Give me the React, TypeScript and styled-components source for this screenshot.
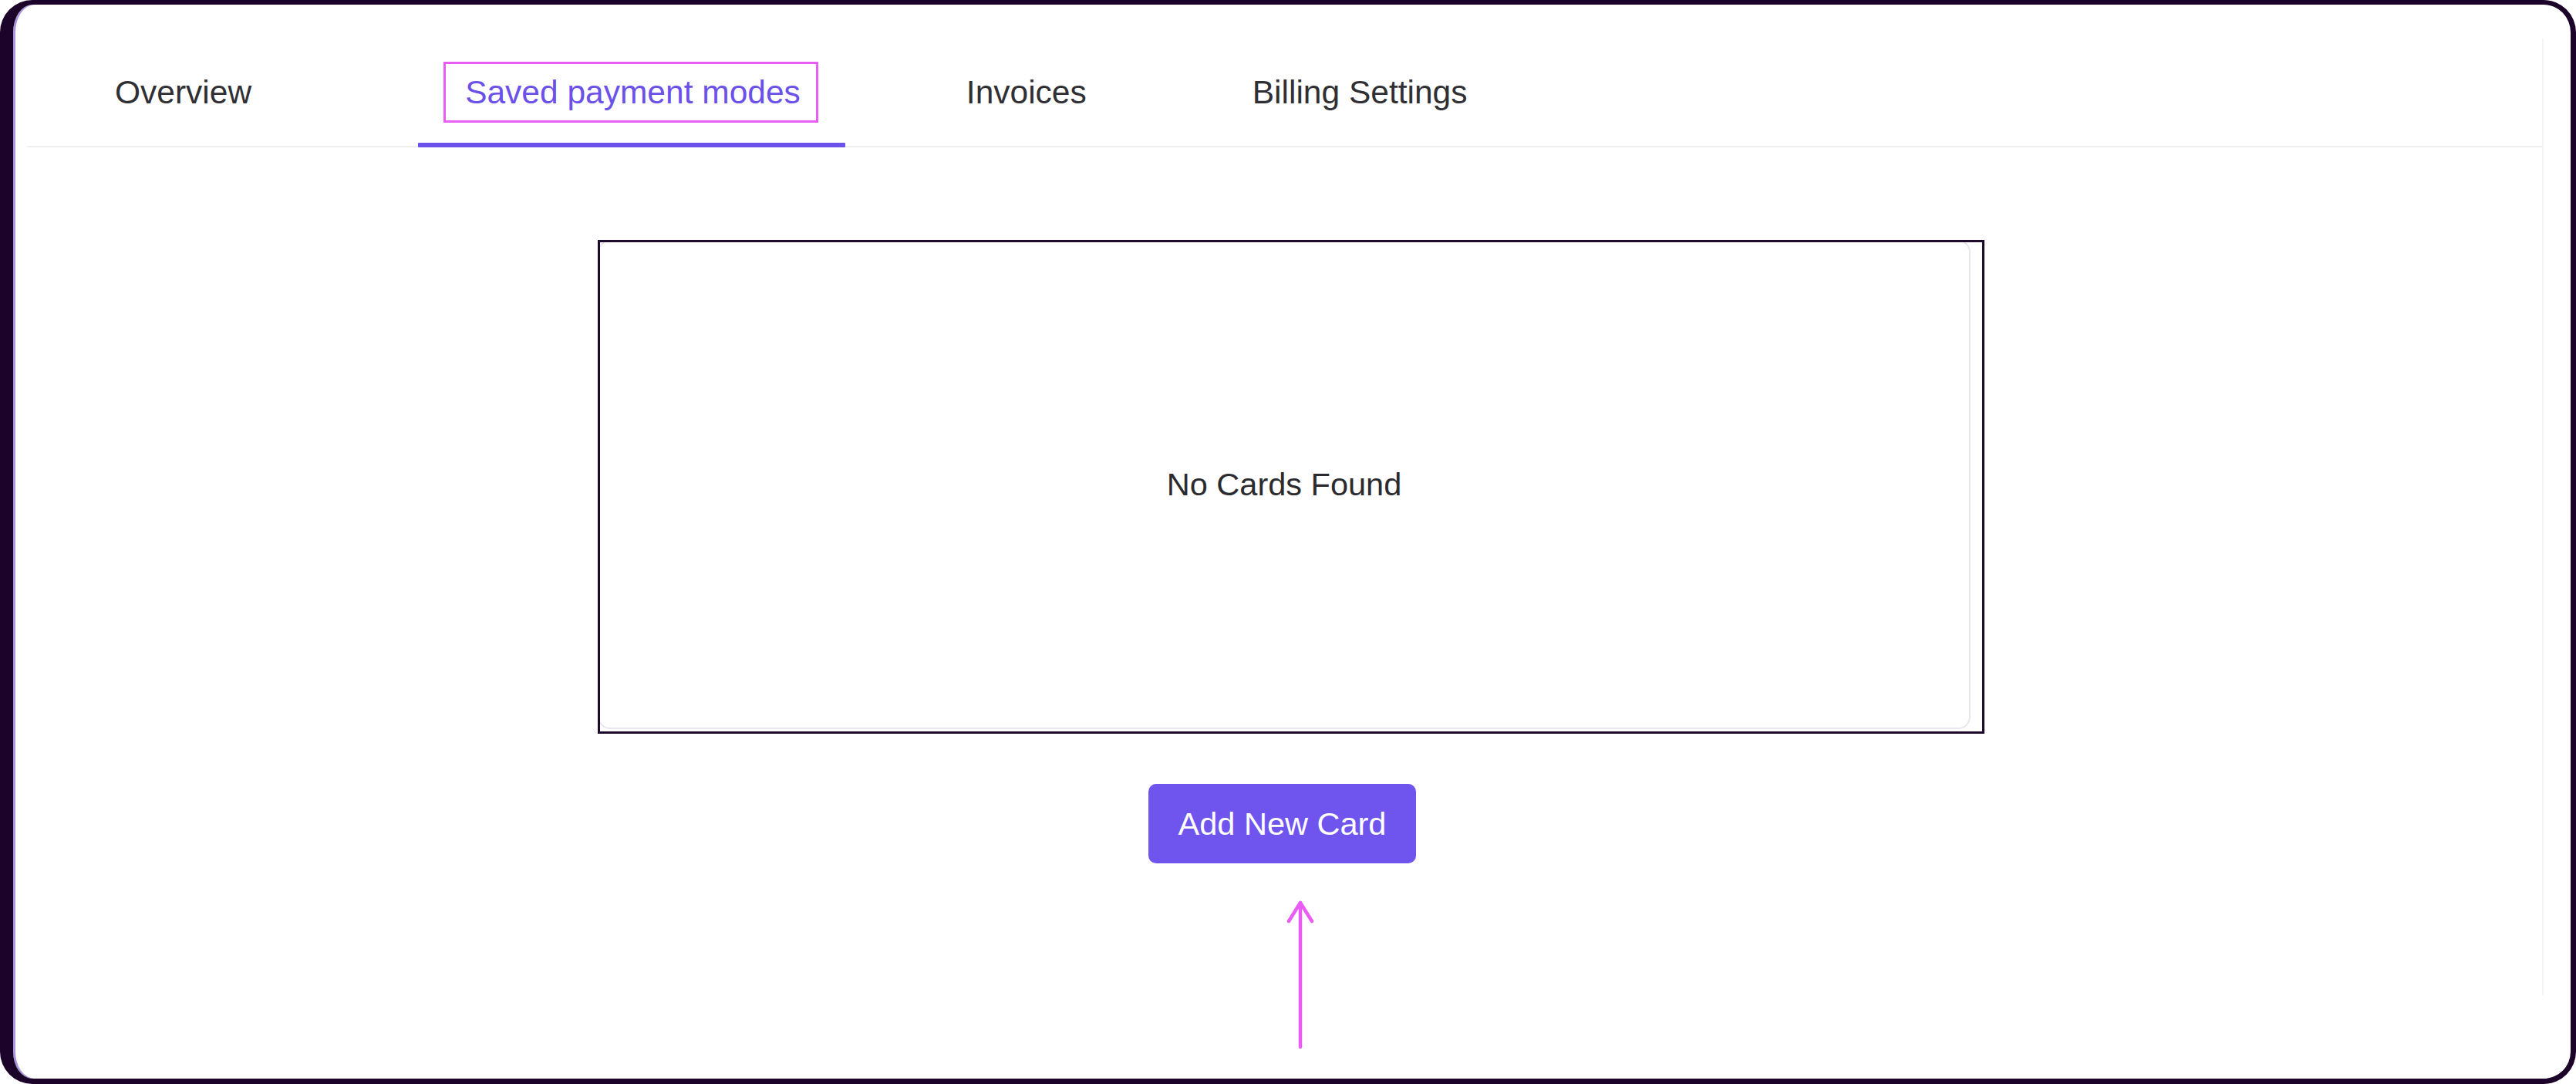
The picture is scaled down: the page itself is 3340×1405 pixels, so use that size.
import React from "react";
import styled, { createGlobalStyle } from "styled-components";

const Global = createGlobalStyle`
  html, body { margin: 0; padding: 0; background: #ffffff; }
  body { font-family: "Liberation Sans", Arial, sans-serif; }
  * { box-sizing: border-box; }
`;

const Frame = styled.div`
  width: 3340px;
  height: 1405px;
  background: #ffffff;
  border-style: solid;
  border-color: #1c0329;
  border-width: 6px 7px 7px 17px;
  border-radius: 42px;
  box-shadow: inset 3px 0 0 #a796dc;
  padding: 44px 35px 108px 18px;
  display: flex;
`;

const Panel = styled.div`
  flex: 1;
  display: flex;
  flex-direction: column;
  border-right: 2px solid #f4f4f6;
`;

const TabBar = styled.nav`
  height: 141px;
  display: flex;
  align-items: stretch;
  padding-left: 53px;
  gap: 96px;
  border-bottom: 2px solid #efeff2;
`;

const Tab = styled.div<{ $active?: boolean }>`
  position: relative;
  display: flex;
  align-items: center;
  padding: 0 58px 0 61px;
  font-size: 42.5px;
  color: ${(p) => (p.$active ? "#6b51e9" : "#303034")};
  &:first-child { margin-right: 62px; }
  &::after {
    content: "";
    display: ${(p) => (p.$active ? "block" : "none")};
    position: absolute;
    left: 0;
    right: 0;
    bottom: -2px;
    height: 6px;
    background: #6c52e8;
    border-radius: 1px;
  }
`;

const Highlight = styled.span`
  display: flex;
  align-items: center;
  height: 79px;
  margin: 0 -23px 0 -28px;
  padding: 0 20px 0 25px;
  border: 3px solid #e95df5;
`;

const Content = styled.div`
  flex: 1;
  display: flex;
  flex-direction: column;
  align-items: center;
  padding-top: 120px;
`;

const Outline = styled.div`
  position: relative;
  width: 1798px;
  height: 640px;
  margin-left: 17px;
  display: flex;
  align-items: flex-start;
  &::after {
    content: "";
    position: absolute;
    inset: 0;
    border: 3px solid #1d0a2c;
    pointer-events: none;
  }
`;

const Card = styled.div`
  width: 1780px;
  height: 634px;
  border: 2px solid #e8e7ee;
  border-radius: 16px;
  display: flex;
  align-items: center;
  justify-content: center;
  font-size: 41.5px;
  color: #2b2b2f;
`;

const ButtonWrap = styled.div`
  position: relative;
  margin-top: 65px;
  margin-right: 6px;
`;

const AddButton = styled.button`
  width: 347px;
  height: 103px;
  border: none;
  border-radius: 10px;
  background: #6f55ed;
  color: #ffffff;
  font-family: "Liberation Sans", Arial, sans-serif;
  font-size: 41.5px;
  display: flex;
  align-items: center;
  justify-content: center;
  cursor: pointer;
`;

const Pointer = styled.svg`
  position: absolute;
  left: 177px;
  top: 150px;
`;

export default function App() {
  return (
    <>
      <Global />
      <Frame>
        <Panel>
          <TabBar>
            <Tab>Overview</Tab>
            <Tab $active>
              <Highlight>Saved payment modes</Highlight>
            </Tab>
            <Tab>Invoices</Tab>
            <Tab>Billing Settings</Tab>
          </TabBar>
          <Content>
            <Outline>
              <Card>No Cards Found</Card>
            </Outline>
            <ButtonWrap>
              <AddButton>Add New Card</AddButton>
              <Pointer width="40" height="195" viewBox="0 0 40 195">
                <path
                  d="M20 4 L20 191 M5 28 L20 4 L35 28"
                  fill="none"
                  stroke="#e95df5"
                  strokeWidth="4.5"
                  strokeLinecap="round"
                  strokeLinejoin="round"
                />
              </Pointer>
            </ButtonWrap>
          </Content>
        </Panel>
      </Frame>
    </>
  );
}
